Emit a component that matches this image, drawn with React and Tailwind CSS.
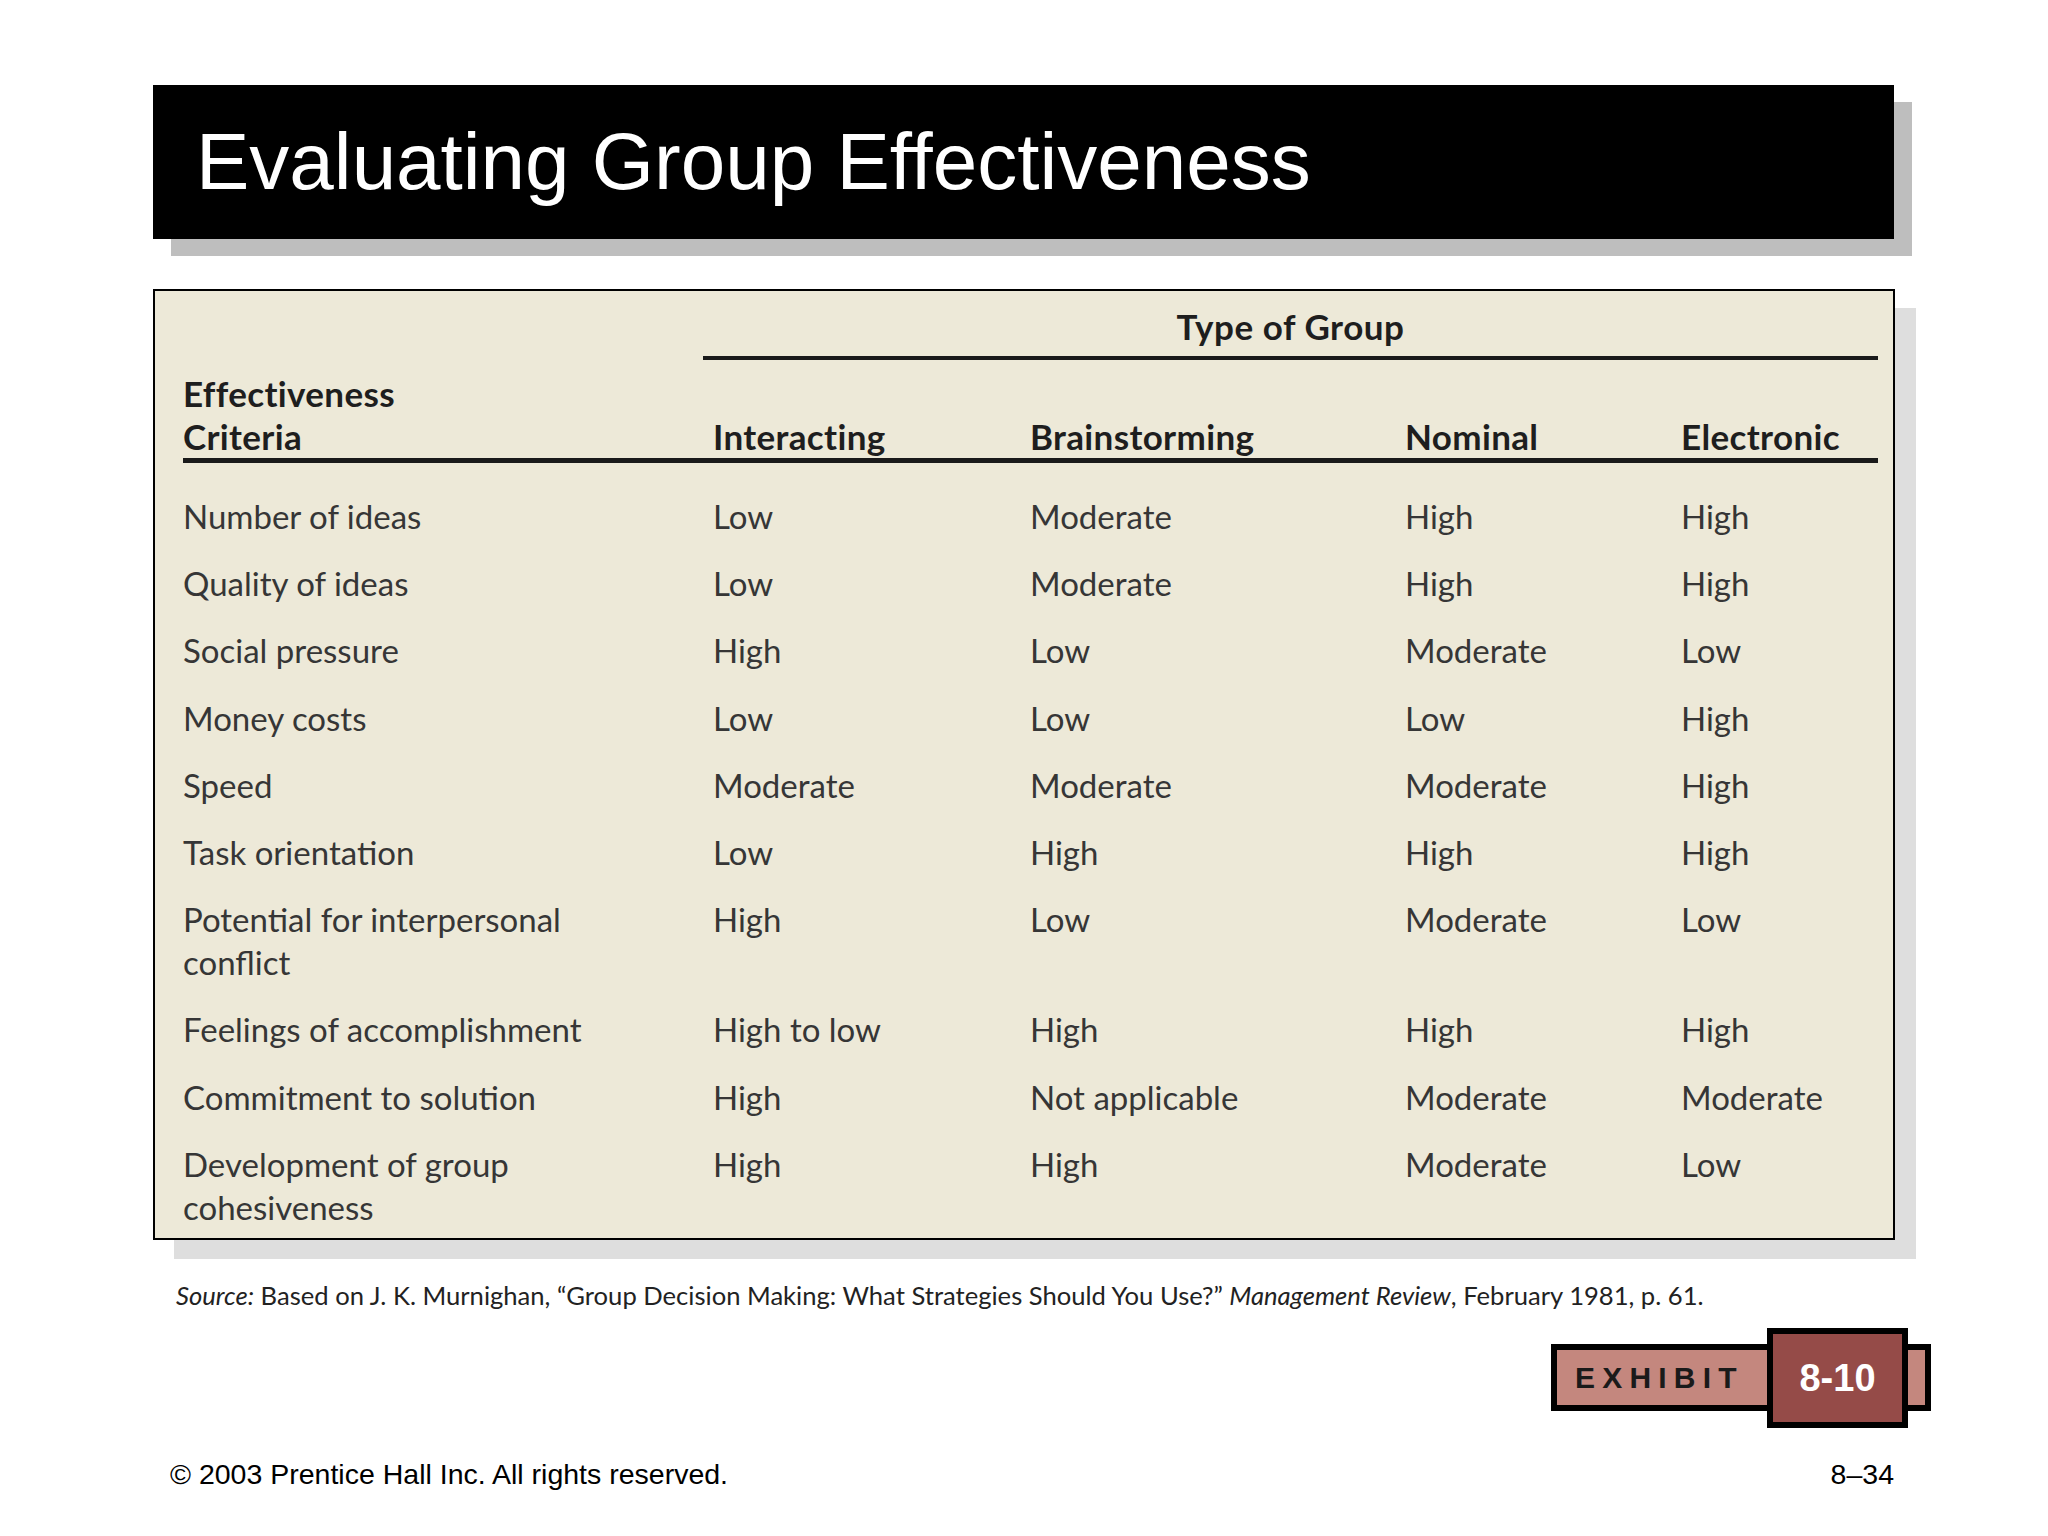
import React from "react";

const rows = [
  [["Number of ideas"], "Low", "Moderate", "High", "High"],
  [["Quality of ideas"], "Low", "Moderate", "High", "High"],
  [["Social pressure"], "High", "Low", "Moderate", "Low"],
  [["Money costs"], "Low", "Low", "Low", "High"],
  [["Speed"], "Moderate", "Moderate", "Moderate", "High"],
  [["Task orientation"], "Low", "High", "High", "High"],
  [["Potential for interpersonal", "conflict"], "High", "Low", "Moderate", "Low"],
  [["Feelings of accomplishment"], "High to low", "High", "High", "High"],
  [["Commitment to solution"], "High", "Not applicable", "Moderate", "Moderate"],
  [["Development of group", "cohesiveness"], "High", "High", "Moderate", "Low"],
];

const cols = "grid grid-cols-[530px_317px_375px_276px_1fr]";

export default function App() {
  return (
    <div className="w-[2048px] h-[1536px] bg-white flex flex-col" style={{ fontFamily: "'Liberation Sans', Arial, sans-serif" }}>
      {/* Title */}
      <div className="ml-[153px] mt-[85px] w-[1741px] h-[154px] bg-black shadow-[18px_17px_0_0_#bebebe] flex items-center">
        <h1 className="ml-[43px] text-white text-[80px] leading-none font-normal" style={{ fontFamily: "'Liberation Sans', Arial, sans-serif" }}>
          Evaluating Group Effectiveness
        </h1>
      </div>

      {/* Table box */}
      <div
        className="ml-[153px] mt-[50px] w-[1742px] border-2 border-black bg-[#ede9d8] shadow-[21px_19px_0_0_#dedede] pl-[28px] pr-[15px] pt-[14px] pb-[0px] text-[#363636] text-[33px] leading-[43px]"
        style={{ fontFamily: "Lato, 'Noto Sans', sans-serif" }}
      >
        <div className={cols}>
          <div />
          <div className="col-span-4 -ml-[10px] border-b-4 border-[#1a1a1a] pb-[8px] text-center font-bold text-[35px] tracking-[0.015em] text-[#1e1e1e]">
            Type of Group
          </div>
        </div>
        <div className={`${cols} mt-[12px] border-b-[5px] border-[#1a1a1a] font-bold text-[35px] tracking-[0.01em] text-[#1e1e1e]`}>
          <div>
            Effectiveness
            <br />
            Criteria
          </div>
          <div className="self-end">Interacting</div>
          <div className="self-end">Brainstorming</div>
          <div className="self-end">Nominal</div>
          <div className="self-end">Electronic</div>
        </div>
        <div className="pt-[20px]">
          {rows.map((r, i) => (
            <div key={i} className={`${cols} pt-[12.1px] pb-[12.1px] last:pb-[9px]`}>
              <div>
                {r[0].map((l, j) => (
                  <div key={j}>{l}</div>
                ))}
              </div>
              <div>{r[1]}</div>
              <div>{r[2]}</div>
              <div>{r[3]}</div>
              <div>{r[4]}</div>
            </div>
          ))}
        </div>
      </div>

      {/* Source */}
      <div
        className="ml-[176px] mt-[40px] text-[25.6px] leading-[30px] text-[#222]"
        style={{ fontFamily: "Lato, 'Noto Sans', sans-serif" }}
      >
        <i>Source:</i> Based on J. K. Murnighan, “Group Decision Making: What Strategies Should You Use?” <i>Management Review</i>, February 1981, p. 61.
      </div>

      {/* Exhibit badge */}
      <div className="ml-[1551px] mt-[18px] flex items-center">
        <div className="w-[216px] h-[67px] bg-[#c4877e] border-y-[6px] border-l-[6px] border-black flex items-center pl-[18px]">
          <span className="text-[30px] font-bold tracking-[0.24em] text-[#1a1a1a] leading-none">EXHIBIT</span>
        </div>
        <div className="w-[141px] h-[100px] bg-[#954b48] border-[6px] border-black flex items-center justify-center">
          <span className="text-[38px] font-bold text-white leading-none">8-10</span>
        </div>
        <div className="w-[23px] h-[67px] bg-[#c4877e] border-y-[6px] border-r-[6px] border-black" />
      </div>

      {/* Footer */}
      <div className="ml-[170px] w-[1724px] mt-[30px] flex justify-between text-[28.5px] leading-[32px] text-black">
        <span>© 2003 Prentice Hall Inc. All rights reserved.</span>
        <span>8–34</span>
      </div>
    </div>
  );
}
